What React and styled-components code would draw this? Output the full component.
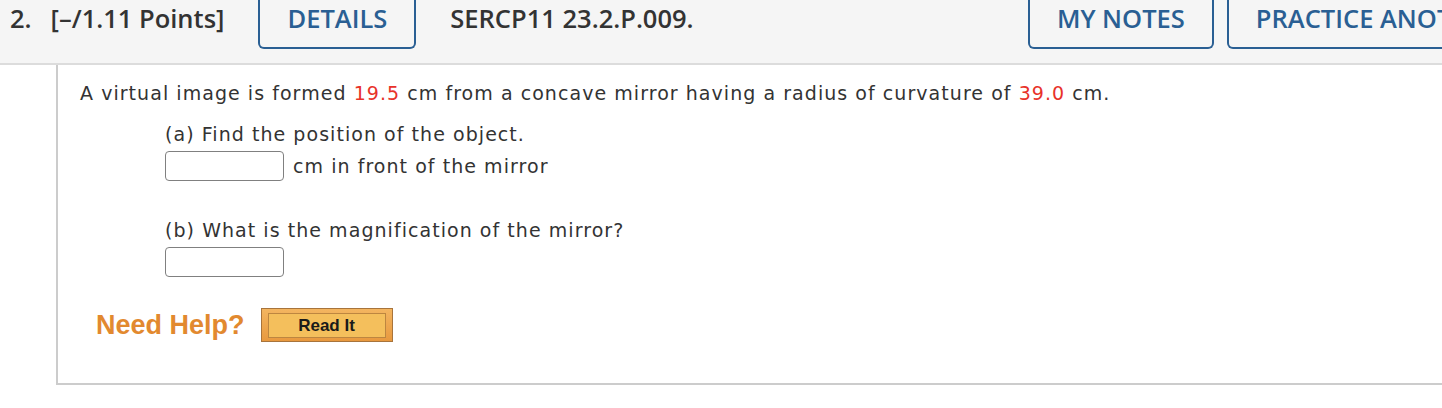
import React from 'react';
import styled, { createGlobalStyle } from 'styled-components';

const GlobalStyle = createGlobalStyle`
	html, body {
		margin: 0;
		padding: 0;
		background: #ffffff;
		overflow: hidden;
	}
`;

const Page = styled.div`
	width: 1530px;
`;

// header bar
const Header = styled.div`
	display: flex;
	align-items: flex-start;
	height: 63px;
	padding-left: 10px;
	background-color: #f5f5f5;
	border-bottom: 2px solid #dcdcdc;
	font-family: "Open Sans", "DejaVu Sans", sans-serif;
	font-weight: 600;
	font-size: 25.5px;
	white-space: nowrap;
`;

const HeaderText = styled.div`
	color: #333333;
	line-height: 37px;
	margin-left: ${props => props.ml || 0}px;
`;

const Tab = styled.div`
	display: flex;
	align-items: flex-start;
	height: 47px;
	padding: 0 ${props => props.px || 27}px;
	margin-left: ${props => props.ml || 0}px;
	border: 2px solid #2a5f93;
	border-top: none;
	border-radius: 0 0 6px 6px;
	color: #2a5f93;
	line-height: 37px;
	text-transform: uppercase;
`;

const RightGroup = styled.div`
	display: flex;
	gap: 13px;
	margin-left: auto;
`;

// question card
const Card = styled.div`
	margin-left: 56px;
	padding: 16px 0 41px 0;
	border-left: 2px solid #cccccc;
	border-bottom: 2px solid #cccccc;
	font-family: "DejaVu Sans", Verdana, sans-serif;
	font-size: 19px;
	letter-spacing: 1.05px;
	color: #333333;
`;

const Question = styled.div`
	padding-left: 22px;
	line-height: 24px;
`;

const Value = styled.span`
	color: #e8322a;
`;

const Part = styled.div`
	padding-left: 107px;
	margin-top: ${props => props.mt}px;
`;

const PartLabel = styled.div`
	line-height: 24px;
	margin-bottom: 5px;
`;

const AnswerRow = styled.div`
	display: flex;
	align-items: center;
	gap: 9px;
	height: 30px;
`;

const AnswerBox = styled.input`
	box-sizing: border-box;
	width: 119px;
	height: 30px;
	margin: 0;
	padding: 0 6px;
	border: 1px solid #808080;
	border-radius: 4px;
	background: #ffffff;
	font: inherit;
`;

const HelpRow = styled.div`
	display: flex;
	align-items: center;
	gap: 16px;
	height: 34px;
	margin-top: 31px;
	padding-left: 38px;
	letter-spacing: 0;
`;

const HelpLabel = styled.div`
	font-family: "Liberation Sans", Arial, sans-serif;
	font-weight: 700;
	font-size: 27px;
	color: #e2892f;
`;

const ReadItButton = styled.button`
	box-sizing: border-box;
	display: flex;
	width: 132px;
	height: 34px;
	margin: 0;
	padding: 4px 6px 3px 6px;
	border: 1px solid #a8743c;
	background: linear-gradient(#f3b560, #e8993f);
	cursor: pointer;
`;

const ReadItInner = styled.span`
	flex: 1;
	display: flex;
	align-items: center;
	justify-content: center;
	border: 1px solid #bd8640;
	background-color: #f4bf5c;
	font-family: "Liberation Sans", Arial, sans-serif;
	font-weight: 700;
	font-size: 17px;
	color: #1a1a1a;
`;

export default function App() {
	return (
		<Page>
			<GlobalStyle />
			<Header>
				<HeaderText>2.</HeaderText>
				<HeaderText ml={19}>[–/1.11 Points]</HeaderText>
				<Tab ml={34}>Details</Tab>
				<HeaderText ml={34}>SERCP11 23.2.P.009.</HeaderText>
				<RightGroup>
					<Tab>My Notes</Tab>
					<Tab>Practice Another</Tab>
				</RightGroup>
			</Header>

			<Card>
				<Question>
					A virtual image is formed <Value>19.5</Value> cm from a concave mirror having a radius of curvature of <Value>39.0</Value> cm.
				</Question>

				<Part mt={17}>
					<PartLabel>(a) Find the position of the object.</PartLabel>
					<AnswerRow>
						<AnswerBox type="text" />
						<span>cm in front of the mirror</span>
					</AnswerRow>
				</Part>

				<Part mt={37}>
					<PartLabel>(b) What is the magnification of the mirror?</PartLabel>
					<AnswerRow>
						<AnswerBox type="text" />
					</AnswerRow>
				</Part>

				<HelpRow>
					<HelpLabel>Need Help?</HelpLabel>
					<ReadItButton type="button">
						<ReadItInner>Read It</ReadItInner>
					</ReadItButton>
				</HelpRow>
			</Card>
		</Page>
	);
}
